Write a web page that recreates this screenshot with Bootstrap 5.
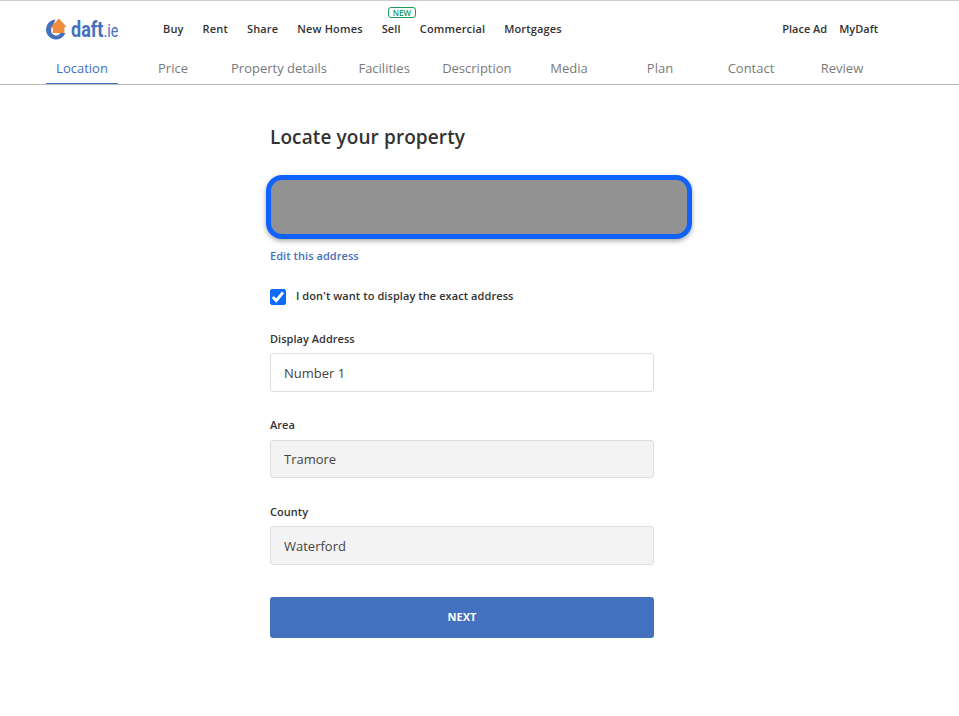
<!DOCTYPE html>
<html lang="en">
<head>
<meta charset="utf-8">
<title>Locate your property</title>
<link href="https://cdn.jsdelivr.net/npm/bootstrap@5.3.0/dist/css/bootstrap.min.css" rel="stylesheet">
<style>
html,body{background:#fff}
body{font-family:"Open Sans","Noto Sans",sans-serif;color:#333;height:716px;overflow:hidden}
.site-head{border-top:1px solid #ccc;border-bottom:1px solid #bbb;height:85px;padding:0 81px 0 46px}
.top-row{height:54px}
.logo-box{width:117px;flex:none}
.main-links,.side-links{font-size:11px;font-weight:600;line-height:15px}
.main-links{gap:19px;letter-spacing:.16px}
.side-links{gap:12px}
.main-links a,.side-links a{color:#333;text-decoration:none;white-space:nowrap}
.new-tag{position:absolute;left:6px;top:-14px;font-size:8px;line-height:9px;font-weight:600;letter-spacing:0;color:#1d9a5b;border:1px solid #1d9a5b;border-radius:3px;padding:0 4px;background:#fff;height:11px}
.tab-row{gap:19px;height:29px}
.tab-item{min-width:72px;padding:0 3px;text-align:center;font-size:13px;line-height:26px;color:#7a7a7a;text-decoration:none;white-space:nowrap;height:29px}
.tab-item.on{color:#4470c0;font-weight:500;border-bottom:1px solid #4470c0}
.form-col{width:419px;margin:0 auto;padding-top:39px}
.page-title{font-size:19px;font-weight:600;line-height:26px;letter-spacing:.1px;color:#333;margin:0 0 25px}
.addr-mask{width:426px;height:64px;margin-left:-4px;background:#929292;border:5px solid #0f62fe;border-radius:16px;box-shadow:0 2px 5px rgba(0,0,0,.35)}
.edit-link{display:block;font-size:11px;font-weight:600;line-height:15px;letter-spacing:.06px;color:#4470c0;text-decoration:none;margin:9px 0 25px}
.chk-row{gap:10px;margin-bottom:25.8px;min-height:16px;padding:0}
.chk-row .form-check-input{width:16px;height:16px;margin:0;float:none;flex:none;background-color:#0f6cfa;border-color:#0f6cfa;border-radius:2px;background-size:16px;background-image:url("data:image/svg+xml,%3csvg xmlns='http://www.w3.org/2000/svg' viewBox='0 0 16 16'%3e%3cpath fill='none' stroke='%23fff' stroke-width='3' d='M2.8 8 6.3 11.6 13 3.4'/%3e%3c/svg%3e")}
.chk-row label{font-size:11px;font-weight:600;line-height:15px;letter-spacing:.08px;color:#333;padding-bottom:2px}
.fields{width:384px}
.fld-label{display:block;font-size:11px;font-weight:600;line-height:15px;letter-spacing:.03px;color:#333;margin:0 0 7.5px}
.fld{height:38.6px;font-size:13px;line-height:20px;padding:0 13px;border:1px solid #ddd;border-radius:3px;color:#444;margin-bottom:25.4px;box-shadow:none}
.fld:disabled{background:#f3f3f3;border-color:#ddd;color:#444;opacity:1}
.next-btn{width:100%;height:41px;margin-top:6.5px;background:#4470c0;border:0;border-radius:3px;color:#fff;font-size:11px;font-weight:700}
</style>
</head>
<body>
<header class="site-head">
  <div class="top-row d-flex align-items-center">
    <a class="logo-box d-block" href="#" aria-label="daft.ie">
      <svg width="80" height="32" viewBox="0 -4 80 32" class="d-block">
        <path d="M9.5 3.5a10 10 0 1 0 9.9 13.4l-4.7-.6a5 5 0 0 1-9.6-2.2 5 5 0 0 1 1.4-3.5z" fill="#4470c0"/>
        <path d="M13 2.6 20.6 11H18.4V17H6.8V12H4z" fill="#f08a3c"/>
        <text transform="translate(25 21) scale(.84 1)" font-family="Roboto,sans-serif" font-size="21.5" font-weight="700" fill="#4470c0">daft</text>
        <text transform="translate(57.5 21) scale(.76 1)" font-family="Roboto,sans-serif" font-size="19" font-weight="400" fill="#4470c0">.ie</text>
      </svg>
    </a>
    <nav class="main-links d-flex">
      <a href="#">Buy</a><a href="#">Rent</a><a href="#">Share</a><a href="#">New Homes</a>
      <a href="#" class="position-relative">Sell<span class="new-tag">NEW</span></a>
      <a href="#">Commercial</a><a href="#">Mortgages</a>
    </nav>
    <nav class="side-links d-flex ms-auto">
      <a href="#">Place Ad</a><a href="#">MyDaft</a>
    </nav>
  </div>
  <nav class="tab-row d-flex">
    <a class="tab-item on" href="#">Location</a>
    <a class="tab-item" href="#">Price</a>
    <a class="tab-item" href="#">Property details</a>
    <a class="tab-item" href="#">Facilities</a>
    <a class="tab-item" href="#">Description</a>
    <a class="tab-item" href="#">Media</a>
    <a class="tab-item" href="#">Plan</a>
    <a class="tab-item" href="#">Contact</a>
    <a class="tab-item" href="#">Review</a>
  </nav>
</header>
<main class="form-col">
  <h1 class="page-title">Locate your property</h1>
  <div class="addr-mask"></div>
  <a class="edit-link" href="#">Edit this address</a>
  <div class="chk-row form-check d-flex align-items-center">
    <input class="form-check-input" type="checkbox" id="hideAddr" checked>
    <label for="hideAddr">I don't want to display the exact address</label>
  </div>
  <form class="fields">
    <label class="fld-label" for="f1">Display Address</label>
    <input class="form-control fld" id="f1" value="Number 1">
    <label class="fld-label" for="f2">Area</label>
    <input class="form-control fld" id="f2" value="Tramore" disabled>
    <label class="fld-label" for="f3">County</label>
    <input class="form-control fld" id="f3" value="Waterford" disabled>
    <button class="btn next-btn" type="button">NEXT</button>
  </form>
</main>
<script src="https://cdn.jsdelivr.net/npm/bootstrap@5.3.0/dist/js/bootstrap.bundle.min.js"></script>
</body>
</html>
